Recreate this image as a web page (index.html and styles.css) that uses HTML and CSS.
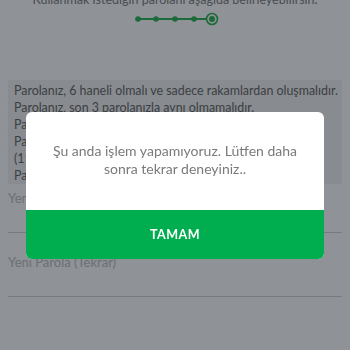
FILE: index.html
```html
<!DOCTYPE html>
<html lang="tr">
<head>
<meta charset="utf-8">
<link rel="stylesheet" href="styles.css">
</head>
<body>
<div class="page">
  <p class="intro">Kullanmak istediğin parolanı aşağıda belirleyebilirsin.</p>
  <div class="stepper">
    <svg width="86" height="16" viewBox="0 0 86 16">
      <line x1="5" y1="8" x2="79" y2="8" stroke="#1c6a3a" stroke-width="2"/>
      <circle cx="5" cy="8" r="2.8" fill="#1c6a3a"/>
      <circle cx="23" cy="8" r="2.8" fill="#1c6a3a"/>
      <circle cx="42" cy="8" r="2.8" fill="#1c6a3a"/>
      <circle cx="61" cy="8" r="2.8" fill="#1c6a3a"/>
      <circle cx="79" cy="8" r="5.5" fill="#8f9296" stroke="#1c6a3a" stroke-width="1.6"/>
      <circle cx="79" cy="8" r="3" fill="#1c6a3a"/>
    </svg>
  </div>
  <div class="rules">
    <p>Parolanız, 6 haneli olmalı ve sadece rakamlardan oluşmalıdır.</p>
    <p>Parolanız, son 3 parolanızla aynı olmamalıdır.</p>
    <p>Parolanız, ardışık rakamlardan oluşmamalıdır.</p>
    <p>Parolanız, tekrar eden rakamlardan oluşmamalıdır</p>
    <p>(111111 gibi).</p>
    <p>Parolanız, doğum tarihinizi içermemelidir.</p>
  </div>
  <div class="field">
    <span class="label">Yeni Parola</span>
    <div class="input"></div>
  </div>
  <div class="field field-second">
    <span class="label">Yeni Parola (Tekrar)</span>
    <div class="input"></div>
  </div>
</div>
<div class="dialog">
  <div class="dialog-body">Şu anda işlem yapamıyoruz. Lütfen daha sonra tekrar deneyiniz..</div>
  <div class="dialog-button">TAMAM</div>
</div>
</body>
</html>
```
FILE: styles.css
```css
html, body {
  margin: 0;
  padding: 0;
  height: 100%;
  background: #8f9296;
  font-family: Lato, "Noto Sans", sans-serif;
  overflow: hidden;
}

.page {
  padding: 0 8px;
}

.intro {
  margin: -8px 0 0;
  text-align: center;
  font-size: 12.5px;
  line-height: 16px;
  color: #4a4d51;
}

.stepper {
  display: flex;
  justify-content: center;
  margin-top: 3px;
  padding-left: 2px;
}

.stepper svg {
  display: block;
}

.rules {
  margin-top: 53px;
  background: #888b8f;
  padding: 2px 6px 0;
  height: 102px;
  overflow: hidden;
}

.rules p {
  margin: 0;
  font-size: 12.4px;
  line-height: 17px;
  color: #3b3e42;
  white-space: nowrap;
}

.field {
  margin-top: 6px;
}

.field-second {
  margin-top: 21px;
}

.label {
  display: block;
  font-size: 13px;
  line-height: 16px;
  color: #6c6f73;
}

.input {
  height: 26px;
  border-bottom: 1px solid #76797d;
}

.dialog {
  position: fixed;
  top: 112px;
  left: 26px;
  width: 298px;
  border-radius: 6px;
  overflow: hidden;
  background: #fff;
}

.dialog-body {
  height: 98px;
  box-sizing: border-box;
  padding: 30px 20px 0;
  text-align: center;
  font-size: 14px;
  line-height: 18px;
  color: #7a7a7a;
}

.dialog-button {
  height: 49px;
  background: #00ad4f;
  color: #fff;
  font-weight: 700;
  font-size: 12.5px;
  letter-spacing: 0.5px;
  display: flex;
  align-items: center;
  justify-content: center;
}
```
